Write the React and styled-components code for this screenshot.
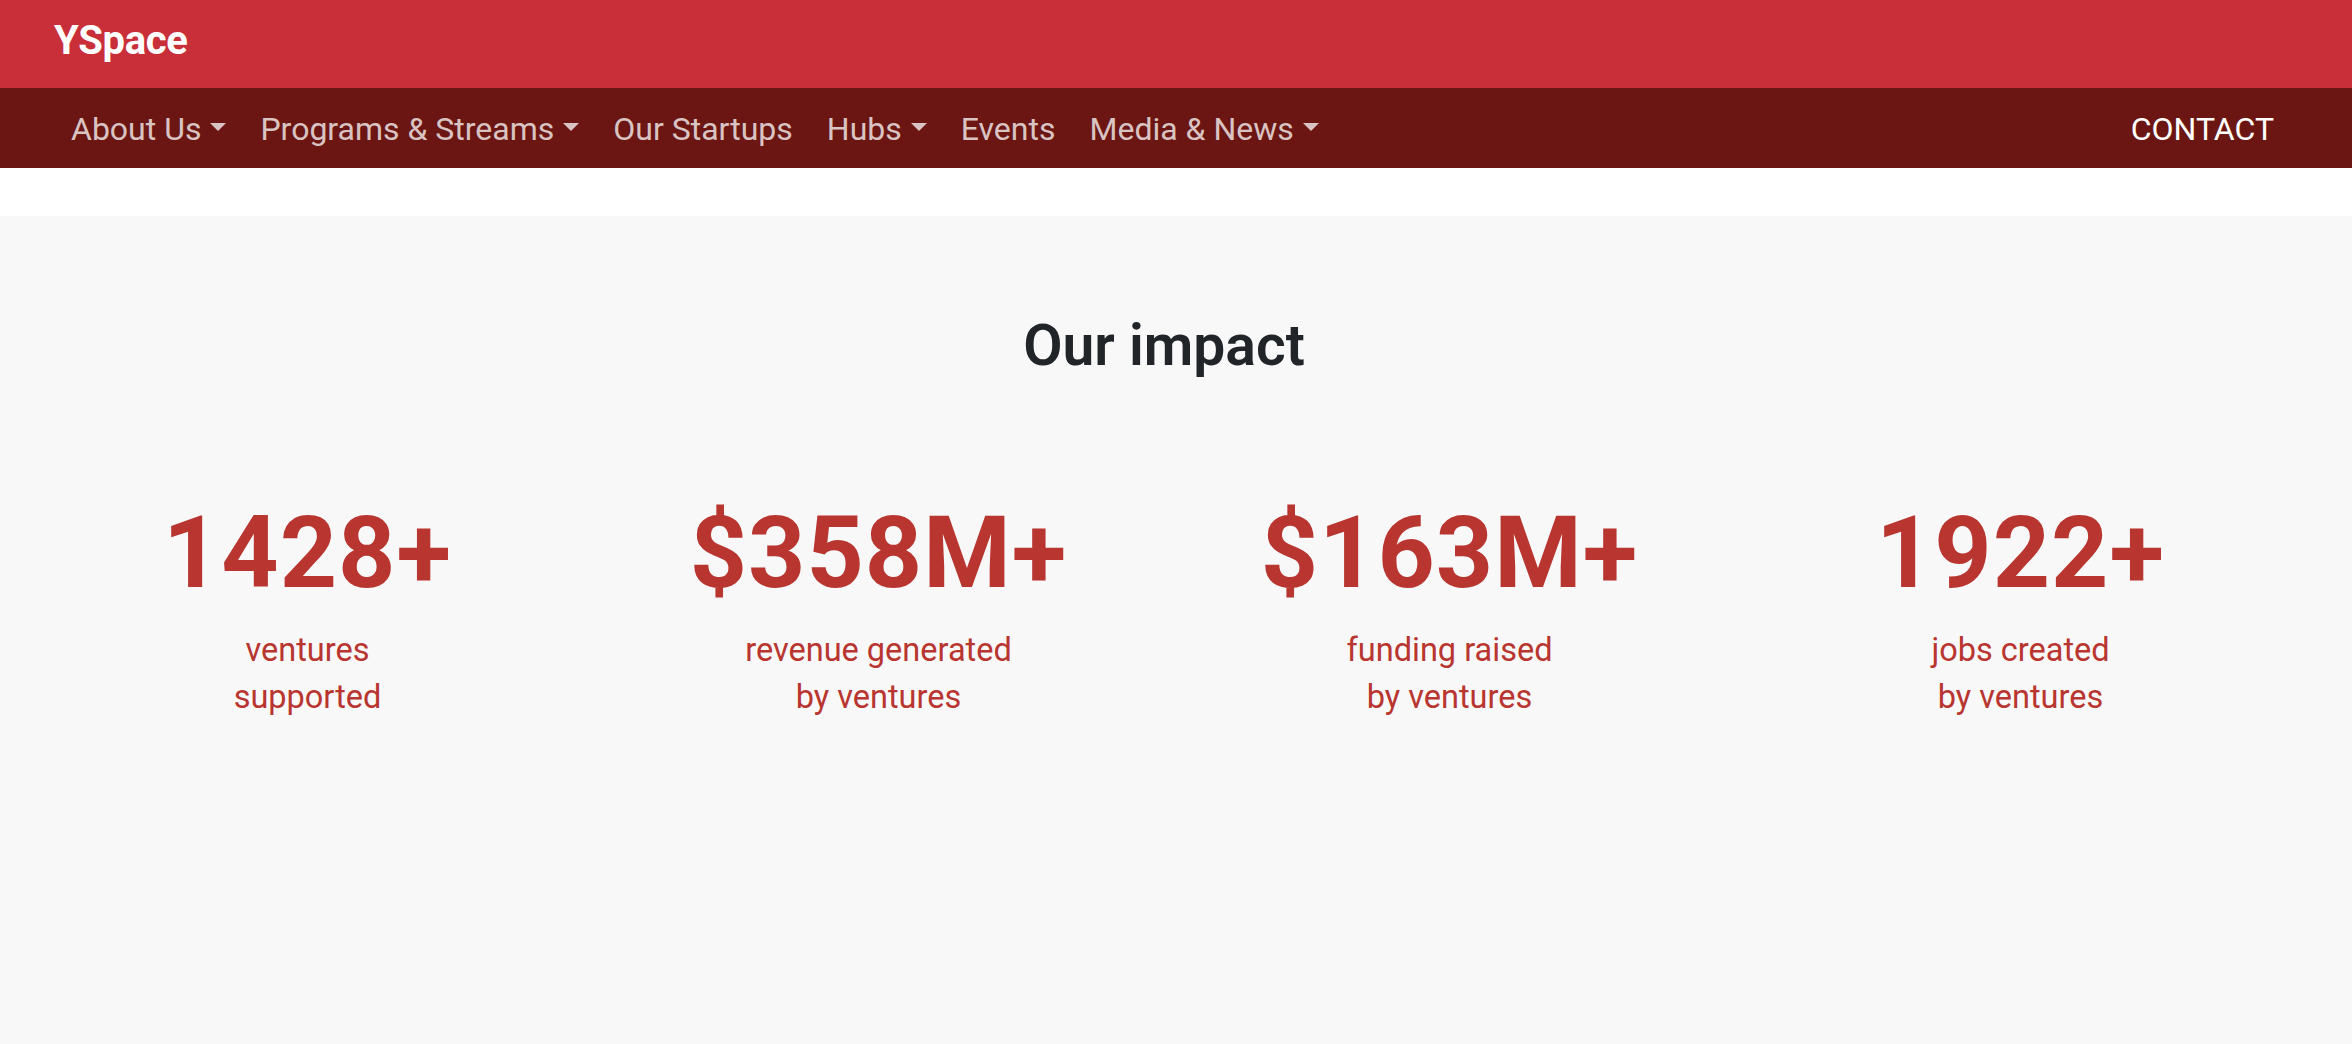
import React from 'react';
import styled, { createGlobalStyle } from 'styled-components';

const GlobalStyle = createGlobalStyle`
	html, body {
		margin: 0;
		padding: 0;
		background: #ffffff;
		font-family: Roboto, "Liberation Sans", Arial, sans-serif;
	}
	* {
		box-sizing: border-box;
	}
`;

const Page = styled.div`
	width: 100%;
	min-height: 1044px;
	display: flex;
	flex-direction: column;
`;

const TopBar = styled.header`
	height: 88px;
	background-color: #c92f39;
	display: flex;
	align-items: center;
	padding: 0 0 6px 54px;
`;

const Brand = styled.a`
	font-size: 40px;
	line-height: 1;
	font-weight: 700;
	color: #ffffff;
	text-decoration: none;
	letter-spacing: -0.3px;
`;

const NavBar = styled.nav`
	height: 80px;
	background-color: #6b1612;
	display: flex;
	align-items: center;
	justify-content: space-between;
	padding: 2px 61px 0 54px;
`;

const NavList = styled.ul`
	display: flex;
	align-items: center;
	list-style: none;
	margin: 0;
	padding: 0;
`;

const NavLink = styled.a`
	display: flex;
	align-items: center;
	padding: 0 17px;
	font-size: 32px;
	line-height: 1;
	color: ${(p) => (p.$bright ? '#ffffff' : 'rgba(255,255,255,0.75)')};
	text-decoration: none;
	white-space: nowrap;
	&::after {
		content: ${(p) => (p.$dropdown ? "''" : 'none')};
		display: inline-block;
		margin-left: 9px;
		margin-top: -4px;
		border-top: 8.5px solid currentColor;
		border-left: 8.5px solid transparent;
		border-right: 8.5px solid transparent;
	}
`;

const Spacer = styled.div`
	height: 48px;
	background: #ffffff;
`;

const ImpactSection = styled.section`
	flex: 1;
	background-color: #f8f8f8;
	padding: 96px 46px 0 22px;
`;

const Heading = styled.h2`
	margin: 0;
	text-align: center;
	font-size: 57px;
	line-height: 1.2;
	font-weight: 600;
	color: #212529;
`;

const StatGrid = styled.div`
	display: grid;
	grid-template-columns: repeat(4, 1fr);
	margin-top: 113px;
`;

const Stat = styled.div`
	display: flex;
	flex-direction: column;
	align-items: center;
	text-align: center;
`;

const StatNumber = styled.div`
	font-size: 100px;
	line-height: 1.2;
	font-weight: 700;
	color: #b83530;
	letter-spacing: 1px;
`;

const StatLabel = styled.p`
	margin: 14px 0 0;
	font-size: 32.5px;
	line-height: 47px;
	font-weight: 400;
	color: #b83530;
`;

const links = [
	{ label: 'About Us', dropdown: true },
	{ label: 'Programs & Streams', dropdown: true },
	{ label: 'Our Startups' },
	{ label: 'Hubs', dropdown: true },
	{ label: 'Events' },
	{ label: 'Media & News', dropdown: true },
];

const stats = [
	{ value: '1428+', lines: ['ventures', 'supported'] },
	{ value: '$358M+', lines: ['revenue generated', 'by ventures'] },
	{ value: '$163M+', lines: ['funding raised', 'by ventures'] },
	{ value: '1922+', lines: ['jobs created', 'by ventures'] },
];

const App = () => {
	return (
		<Page>
			<GlobalStyle />
			<TopBar>
				<Brand href="#">YSpace</Brand>
			</TopBar>
			<NavBar>
				<NavList>
					{links.map((l) => (
						<li key={l.label}>
							<NavLink href="#" $dropdown={l.dropdown}>{l.label}</NavLink>
						</li>
					))}
				</NavList>
				<NavLink href="#" $bright>CONTACT</NavLink>
			</NavBar>
			<Spacer />
			<ImpactSection>
				<Heading>Our impact</Heading>
				<StatGrid>
					{stats.map((s) => (
						<Stat key={s.value}>
							<StatNumber>{s.value}</StatNumber>
							<StatLabel>
								{s.lines[0]}
								<br />
								{s.lines[1]}
							</StatLabel>
						</Stat>
					))}
				</StatGrid>
			</ImpactSection>
		</Page>
	);
};

export default App;
